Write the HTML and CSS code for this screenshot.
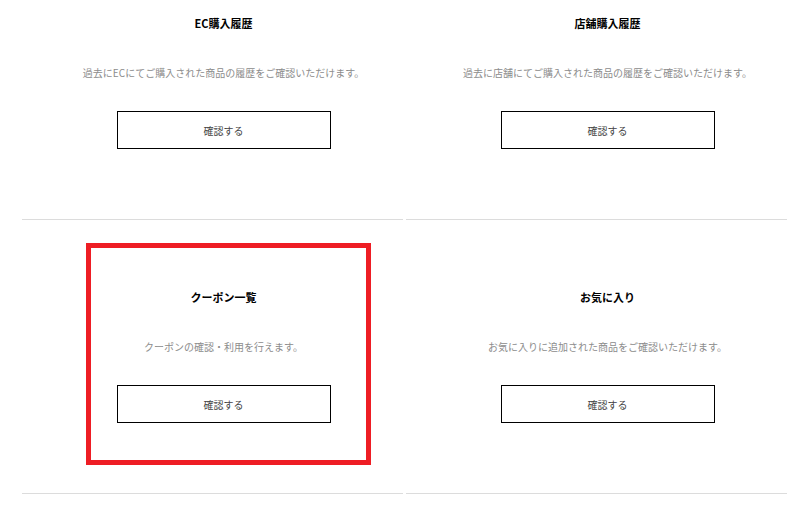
FILE: index.html
```html
<!DOCTYPE html>
<html lang="ja">
<head>
<meta charset="utf-8">
<title>マイページメニュー</title>
<link rel="stylesheet" href="styles.css">
</head>
<body>
<main class="menu">
  <ul class="menu-grid">
    <li class="menu-card">
      <h2 class="menu-title">EC購入履歴</h2>
      <p class="menu-desc">過去にECにてご購入された商品の履歴をご確認いただけます。</p>
      <a class="menu-button" href="#">確認する</a>
    </li>
    <li class="menu-card">
      <h2 class="menu-title">店舗購入履歴</h2>
      <p class="menu-desc">過去に店舗にてご購入された商品の履歴をご確認いただけます。</p>
      <a class="menu-button" href="#">確認する</a>
    </li>
    <li class="menu-card">
      <h2 class="menu-title">クーポン一覧</h2>
      <p class="menu-desc">クーポンの確認・利用を行えます。</p>
      <a class="menu-button" href="#">確認する</a>
    </li>
    <li class="menu-card">
      <h2 class="menu-title">お気に入り</h2>
      <p class="menu-desc">お気に入りに追加された商品をご確認いただけます。</p>
      <a class="menu-button" href="#">確認する</a>
    </li>
  </ul>
  <div class="highlight"></div>
</main>
</body>
</html>
```
FILE: styles.css
```css
html, body {
  margin: 0;
  padding: 0;
  background: #fff;
}
body {
  font-family: "Noto Sans CJK JP", "Noto Sans", sans-serif;
  color: #000;
  overflow: hidden;
}
.menu {
  position: relative;
  display: flow-root;
}
.menu-grid {
  list-style: none;
  margin: -54px 0 0 22px;
  padding: 0;
  display: grid;
  grid-template-columns: 381px 381px;
  column-gap: 3px;
}
.menu-card {
  padding: 68px 0 70px 22px;
  border-bottom: 1px solid #dcdcdc;
  text-align: center;
}
.menu-title {
  margin: 0;
  font-size: 11px;
  line-height: 18px;
  font-weight: bold;
  color: #000;
}
.menu-desc {
  margin: 32px 0 0;
  font-size: 10px;
  line-height: 18px;
  color: #8c8c8c;
}
.menu-button {
  box-sizing: border-box;
  display: flex;
  align-items: center;
  justify-content: center;
  width: 214px;
  height: 38px;
  margin: 29px auto 0;
  border: 1px solid #000;
  font-size: 10px;
  color: #444;
  text-decoration: none;
}
.highlight {
  position: absolute;
  left: 86px;
  top: 243px;
  width: 285px;
  height: 222px;
  box-sizing: border-box;
  border: 5px solid #ee1d24;
  pointer-events: none;
}
```
